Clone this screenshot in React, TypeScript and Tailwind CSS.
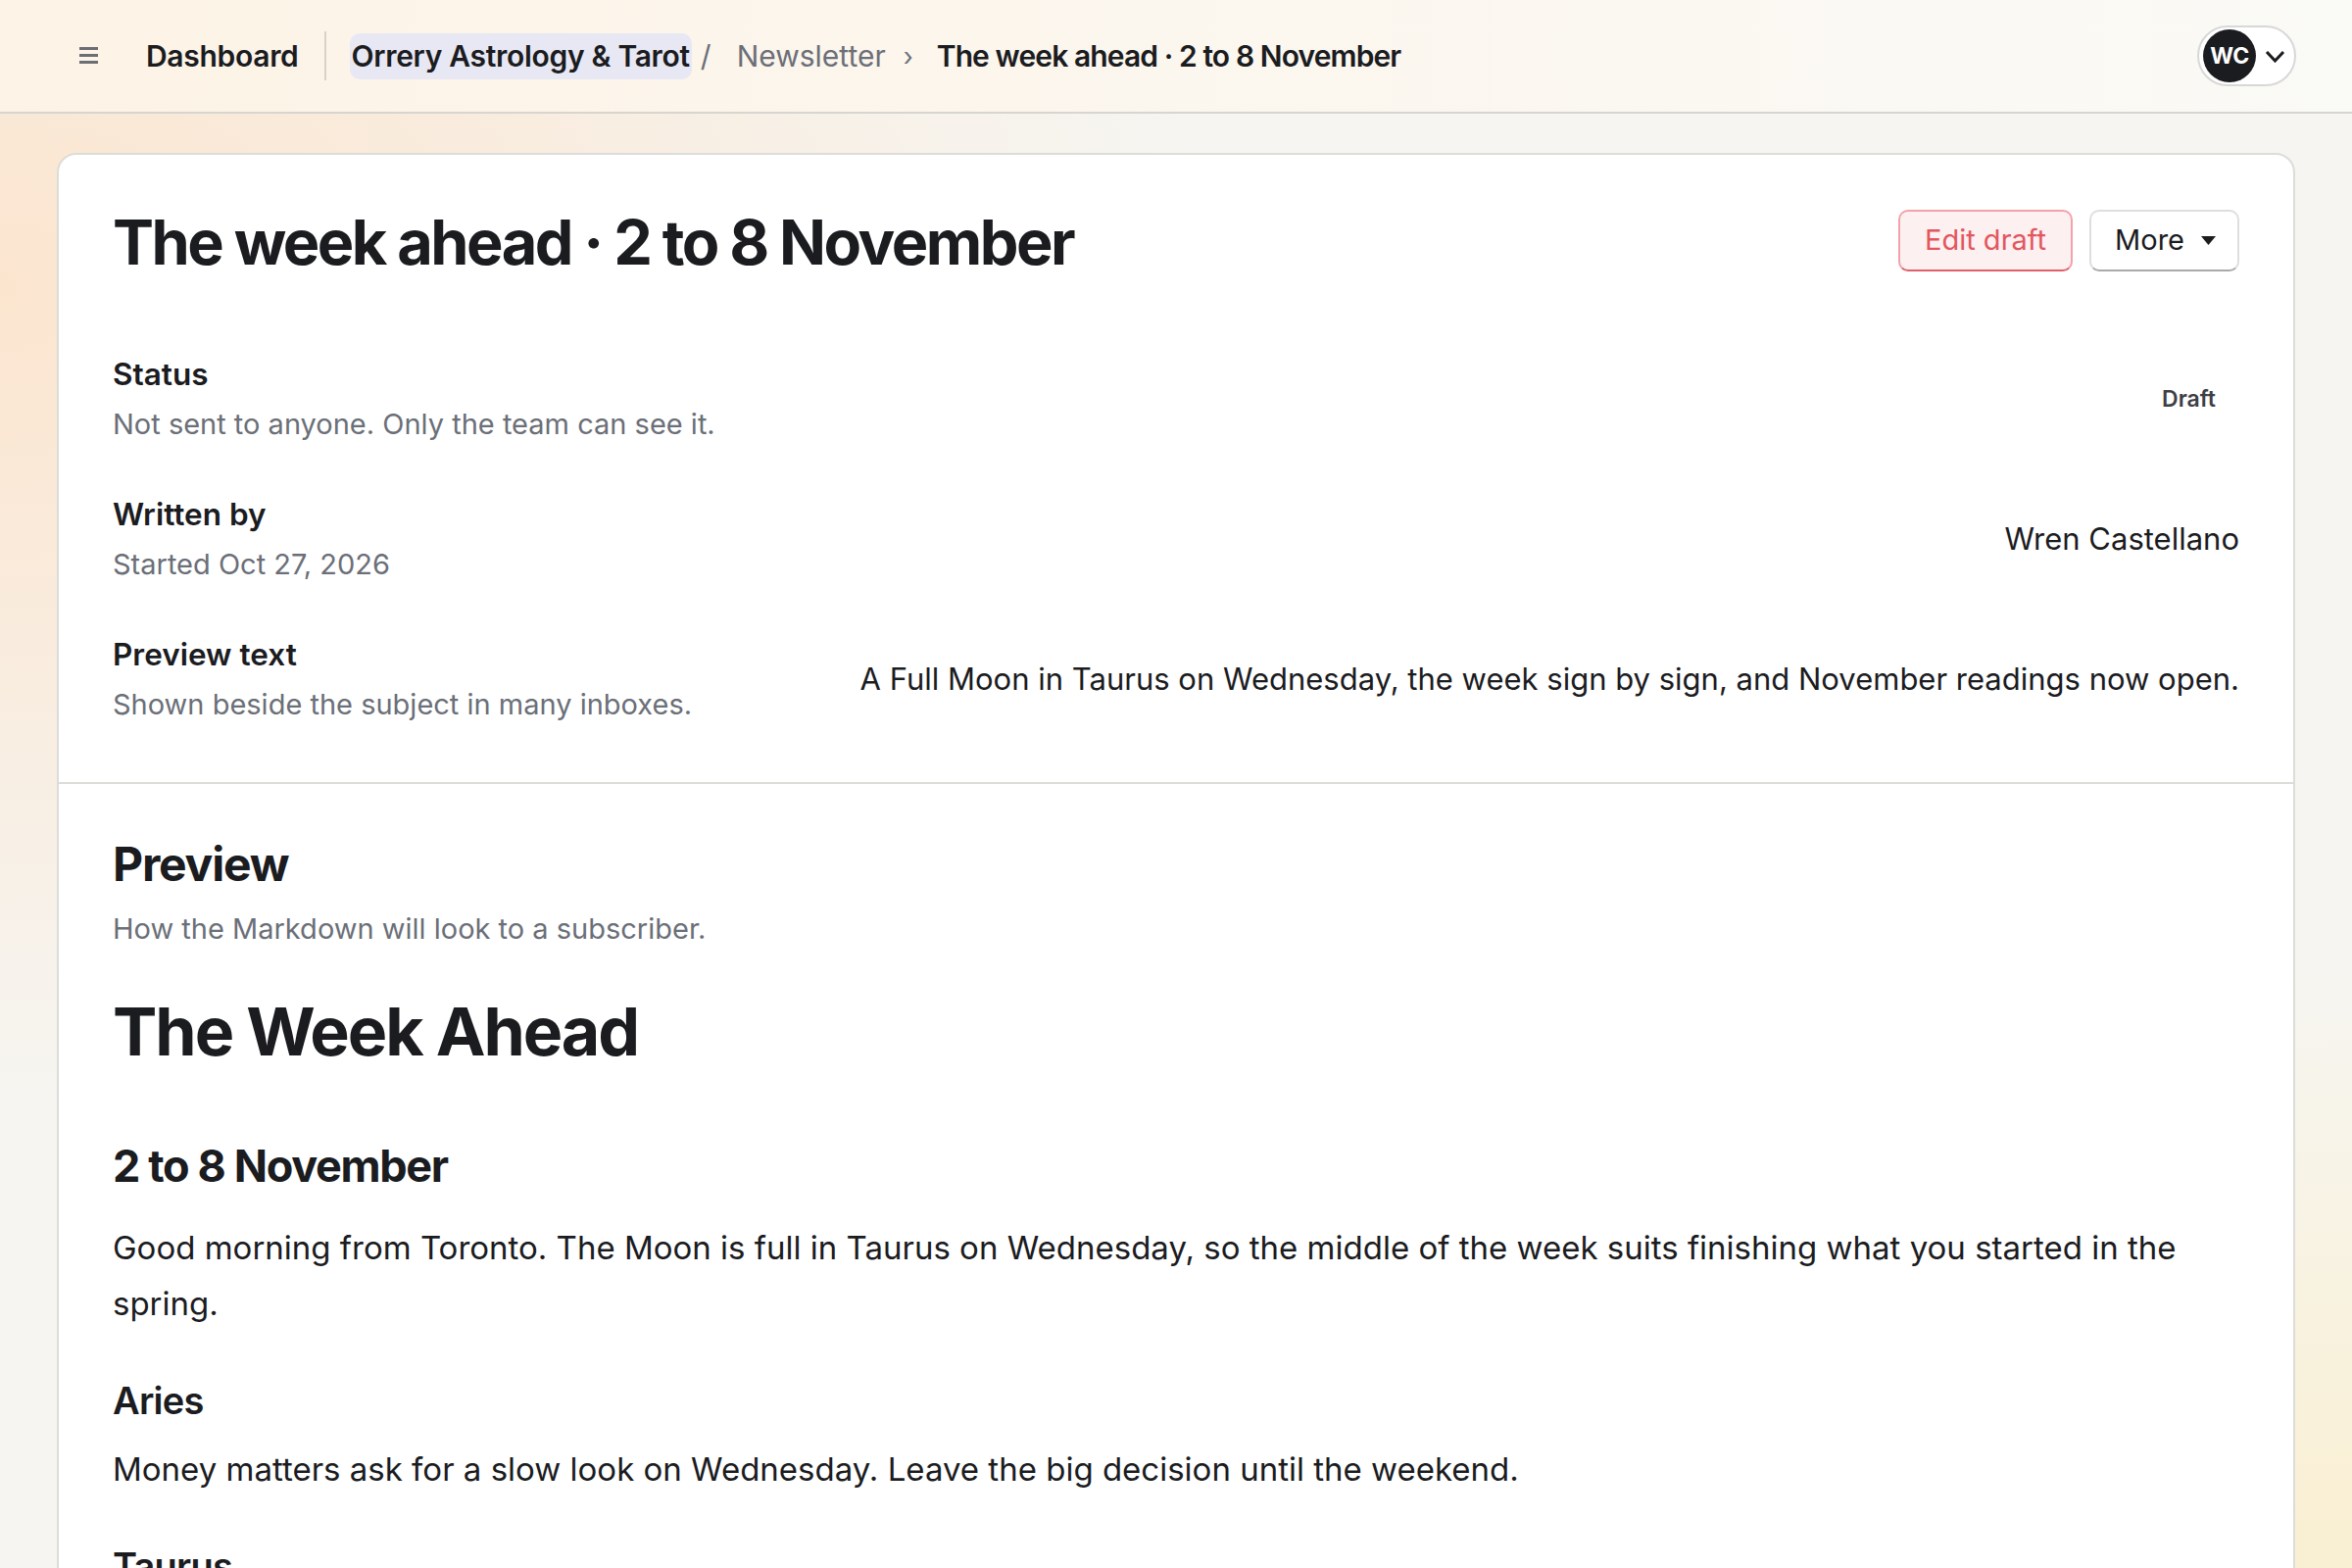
import React from 'react';

const Hamburger = () => (
  <svg width="20" height="18" viewBox="0 0 20 18" className="text-[#6b6e75]">
    <rect x="0" y="0" width="19" height="3" fill="currentColor" />
    <rect x="0" y="7" width="19" height="3" fill="currentColor" />
    <rect x="0" y="14" width="19" height="3" fill="currentColor" />
  </svg>
);

const MetaRow = ({
  label,
  hint,
  children,
}: {
  label: string;
  hint: string;
  children: React.ReactNode;
}) => (
  <div className="flex items-center justify-between gap-10">
    <div className="shrink-0">
      <div className="text-[31.5px] leading-[40px] font-semibold">{label}</div>
      <div className="mt-[11px] text-[29px] leading-[40px] text-[#6b6f78]">{hint}</div>
    </div>
    <div className="text-right">{children}</div>
  </div>
);

const signs = [
  {
    name: 'Aries',
    text: 'Money matters ask for a slow look on Wednesday. Leave the big decision until the weekend.',
  },
  {
    name: 'Taurus',
    text: 'The Full Moon lands in your sign. Say the thing you have been rehearsing, kindly and once.',
  },
  {
    name: 'Gemini',
    text: 'A quiet week for plans and a loud one for messages. Answer the ones that matter first.',
  },
];

export default function App() {
  return (
    <div className="min-h-screen w-full bg-[#f6f5f1] bg-[radial-gradient(ellipse_at_0%_15%,#fbe5cf_0%,rgba(251,229,207,0)_36%),radial-gradient(ellipse_at_100%_100%,#fbecc0_0%,rgba(251,236,192,0)_35%)] font-['Inter',sans-serif] text-[#1b1c1f]">
      <header className="flex h-[116px] items-center justify-between border-b-2 border-[#d6d5cf] bg-linear-to-r from-[#fdf3e6] to-[#fafaf6] pl-[81px] pr-[57px]">
        <nav className="flex items-center">
          <Hamburger />
          <span className="ml-[48px] text-[30px] font-semibold tracking-[-0.01em]">Dashboard</span>
          <span className="ml-[26px] h-[50px] w-[2px] bg-[#d9d2c6]" />
          <span className="ml-[24px] flex h-[47px] items-center rounded-[10px] bg-[#e8e8f4] px-[2px] text-[30px] font-semibold tracking-[-0.01em]">
            Orrery Astrology &amp; Tarot
          </span>
          <span className="ml-[9px] text-[30px] text-[#6b6f78]">/</span>
          <span className="ml-[26px] text-[30px] text-[#6b6f78]">Newsletter</span>
          <span className="ml-[18px] text-[26px] text-[#6b6f78]">›</span>
          <span className="ml-[24px] text-[30px] font-semibold tracking-[-0.03em]">
            The week ahead · 2 to 8 November
          </span>
        </nav>
        <button className="flex h-[62px] w-[101px] items-center rounded-full border-2 border-[#d8d8d8] bg-white pl-[4px]">
          <span className="flex h-[54px] w-[54px] items-center justify-center rounded-full bg-[#1b1c1f] text-[23px] font-bold tracking-[-0.02em] text-white">
            WC
          </span>
          <svg width="21" height="13" viewBox="0 0 21 13" className="ml-[9px]">
            <polyline points="2,2 10.5,11 19,2" fill="none" stroke="#1b1c1f" strokeWidth="3" />
          </svg>
        </button>
      </header>

      <main className="px-[58px] pt-[40px]">
        <div className="rounded-[20px] border-2 border-[#dcdcd9] bg-white">
          <section className="px-[55px] pt-[53px] pb-[59px]">
            <div className="flex items-center justify-between">
              <h1 className="pt-[5px] text-[63px] leading-[63px] font-bold tracking-[-0.04em]">
                The week ahead · 2 to 8 November
              </h1>
              <div className="flex items-center gap-[17px]">
                <button className="flex h-[63px] items-center rounded-[10px] border-2 border-[#f1a3a9] border-b-[#e0606a] bg-[#fcf0f1] px-[25px] text-[29px] text-[#e2575f]">
                  Edit draft
                </button>
                <button className="flex h-[63px] items-center gap-[17px] rounded-[10px] border-2 border-[#dedede] border-b-[#a9a9a9] bg-white pl-[24px] pr-[22px] text-[29px]">
                  More
                  <svg width="15" height="9" viewBox="0 0 15 9">
                    <polygon points="0,0 15,0 7.5,9" fill="#1b1c1f" />
                  </svg>
                </button>
              </div>
            </div>

            <div className="mt-[83px] flex flex-col gap-[52px]">
              <MetaRow label="Status" hint="Not sent to anyone. Only the team can see it.">
                <span className="pr-[24px] text-[23px] font-semibold text-[#3d3f45]">Draft</span>
              </MetaRow>
              <MetaRow label="Written by" hint="Started Oct 27, 2026">
                <span className="text-[31px]">Wren Castellano</span>
              </MetaRow>
              <MetaRow label="Preview text" hint="Shown beside the subject in many inboxes.">
                <span className="text-[31px]">
                  A Full Moon in Taurus on Wednesday, the week sign by sign, and November readings now open.
                </span>
              </MetaRow>
            </div>
          </section>

          <section className="border-t-2 border-[#dcdcd9] px-[55px] pt-[52px] pb-[80px]">
            <h2 className="text-[48px] leading-[60px] font-bold tracking-[-0.025em]">Preview</h2>
            <p className="mt-[16px] text-[29px] leading-[40px] text-[#6b6f78]">
              How the Markdown will look to a subscriber.
            </p>

            <div className="mt-[39px]">
              <h1 className="text-[68px] leading-[90px] font-bold tracking-[-0.03em]">The Week Ahead</h1>
              <h2 className="mt-[63px] text-[45px] leading-[60px] font-bold tracking-[-0.03em]">
                2 to 8 November
              </h2>
              <p className="mt-[25px] text-[33px] leading-[57px]">
                Good morning from Toronto. The Moon is full in Taurus on Wednesday, so the middle of the week
                suits finishing what you started in the spring.
              </p>
              {signs.map((s) => (
                <div key={s.name}>
                  <h3 className="mt-[45px] text-[38px] leading-[50px] font-semibold tracking-[-0.02em]">{s.name}</h3>
                  <p className="mt-[17px] text-[33px] leading-[57px]">{s.text}</p>
                </div>
              ))}
            </div>
          </section>
        </div>
      </main>
    </div>
  );
}
